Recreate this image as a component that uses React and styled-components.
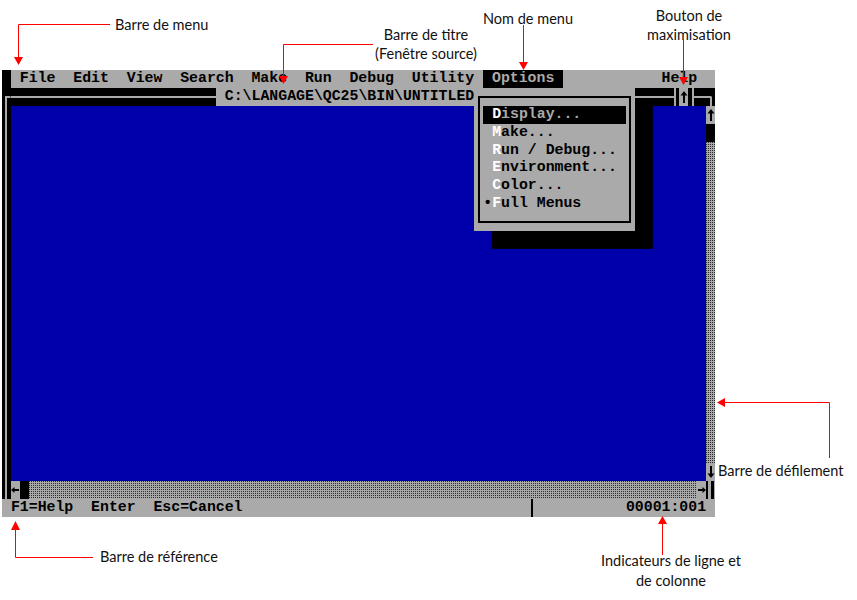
import React from 'react';
import styled, { createGlobalStyle } from 'styled-components';

// text-mode grid: 80 x 25 cells
const CW = 713 / 80;
const RH = 447 / 25;
const cols = (n) => `${n * CW}px`;
const rows = (n) => `${n * RH}px`;

const GRAY = '#aaaaaa';
const BLUE = '#0000aa';
const BLACK = '#000000';
const WHITE = '#ffffff';
const RED = '#ff0000';

const GlobalStyle = createGlobalStyle`
  html, body {
    margin: 0;
    padding: 0;
    background: #ffffff;
  }
`;

const Figure = styled.div`
  position: relative;
  width: 857px;
  height: 600px;
  padding: 70px 0 0 2px;
  box-sizing: border-box;
  overflow: hidden;
`;

const Screen = styled.div`
  position: relative;
  width: 713px;
  height: 447px;
  display: flex;
  flex-direction: column;
  background: ${BLACK};
  font-family: "Liberation Mono", "DejaVu Sans Mono", monospace;
  font-weight: bold;
  font-size: ${CW / 0.6}px;
  line-height: ${RH}px;
  color: ${BLACK};
  white-space: pre;
`;

const Row = styled.div`
  display: flex;
  flex: none;
  height: ${RH}px;
  background: ${(p) => p.$bg || BLACK};
`;

const Body = styled.div`
  display: flex;
  flex: none;
  height: ${rows(21)};
`;

/* ---------- box-drawing frame ---------- */
const seg = (pos, size) => `linear-gradient(${GRAY}, ${GRAY}) ${pos} / ${size} no-repeat`;
const LINES = {
  h: [seg('0 50%', '100% 2px')],
  v: [seg('50% 0', '2px 100%')],
  tl: [seg('100% 50%', 'calc(50% + 1px) 2px'), seg('50% 100%', '2px 50%')],
  tr: [seg('0 50%', 'calc(50% + 1px) 2px'), seg('50% 100%', '2px 50%')],
  lt: [seg('0 50%', '50% 2px'), seg('50% 0', '2px 100%')],
  rt: [seg('100% 50%', '50% 2px'), seg('50% 0', '2px 100%')],
};

const Frame = styled.span`
  flex: ${(p) => (p.$grow ? '1 1 0' : 'none')};
  width: ${(p) => (p.$grow ? 'auto' : cols(p.$w || 1))};
  height: 100%;
  background: ${(p) => LINES[p.$kind].join(', ')}, ${BLACK};
`;

/* ---------- menu bar ---------- */
const MenuBar = styled(Row)`
  background: ${GRAY};
`;

const Blank = styled.span`
  flex: none;
  width: ${(p) => cols(p.$w || 1)};
  background: ${(p) => p.$bg || 'transparent'};
`;

const Spacer = styled.span`
  flex: 1 1 0;
`;

const MenuItem = styled.span`
  flex: none;
  padding: 0 ${CW}px;
  background: ${(p) => (p.$active ? BLACK : 'transparent')};
  color: ${(p) => (p.$active ? GRAY : BLACK)};
`;

/* ---------- title bar ---------- */
const Title = styled.span`
  flex: none;
  width: ${cols(29)};
  background: ${GRAY};
  color: ${BLACK};
`;

const Button = styled.span`
  flex: none;
  width: ${cols(1)};
  height: ${RH}px;
  display: flex;
  align-items: center;
  justify-content: center;
  background: ${GRAY};
`;

/* ---------- editor + scrollbars ---------- */
const Editor = styled.div`
  flex: 1 1 0;
  background: ${BLUE};
`;

const VScroll = styled.div`
  flex: none;
  width: ${cols(1)};
  display: flex;
  flex-direction: column;
`;

const Thumb = styled.span`
  flex: none;
  width: ${cols(1)};
  height: ${RH}px;
  background: ${BLACK};
`;

const Track = styled.span`
  flex: 1 1 0;
  background-color: ${GRAY};
  background-image: conic-gradient(at 1px 1px, transparent 270deg, #2a2a2a 0);
  background-size: 2px 2px;
`;

const Corner = styled.span`
  flex: none;
  width: ${cols(1)};
  background: linear-gradient(
    90deg,
    ${BLACK} 0 2.5px,
    ${GRAY} 2.5px 5px,
    ${BLACK} 5px 8px,
    ${GRAY} 8px
  );
`;

const ArrowSvg = styled.svg`
  display: block;
  transform: ${(p) => (p.$flip ? (p.$h ? 'scaleX(-1)' : 'scaleY(-1)') : 'none')};
`;

function VArrow({ down }) {
  return (
    <ArrowSvg $flip={down} width="8" height="12" viewBox="0 0 8 12">
      <path d="M4 0 L7.5 4.5 L0.5 4.5 Z" fill={BLACK} />
      <rect x="3" y="3" width="2" height="9" fill={BLACK} />
    </ArrowSvg>
  );
}

function HArrow({ left }) {
  return (
    <ArrowSvg $flip={left} $h width="8" height="6" viewBox="0 0 8 6">
      <path d="M8 3 L4.5 0 L4.5 6 Z" fill={BLACK} />
      <rect x="0" y="2" width="5" height="2" fill={BLACK} />
    </ArrowSvg>
  );
}

/* ---------- status bar ---------- */
const StatusText = styled.span`
  flex: none;
  width: ${cols(59)};
`;

const Divider = styled.span`
  flex: none;
  width: ${cols(1)};
  background: linear-gradient(${BLACK}, ${BLACK}) 50% 0 / 2px 100% no-repeat;
`;

const Position = styled.span`
  flex: 1 1 0;
  text-align: right;
  padding-right: ${CW}px;
`;

/* ---------- pull-down menu ---------- */
const Dropdown = styled.div`
  position: absolute;
  left: ${cols(53)};
  top: ${rows(1)};
  width: ${cols(18)};
  height: ${rows(8)};
  box-sizing: border-box;
  padding: ${rows(1)} 0 0 ${cols(1)};
  background: ${GRAY};
  box-shadow: ${cols(2)} ${rows(1)} 0 ${BLACK};

  &::before {
    content: '';
    position: absolute;
    left: ${CW / 2 - 1}px;
    right: ${CW / 2 - 1}px;
    top: ${RH / 2 - 1}px;
    bottom: ${RH / 2 - 1}px;
    border: 2px solid ${BLACK};
  }
`;

const Entry = styled.div`
  position: relative;
  width: ${cols(16)};
  height: ${RH}px;
  background: ${(p) => (p.$active ? BLACK : 'transparent')};
  color: ${(p) => (p.$active ? GRAY : BLACK)};
`;

const Hot = styled.span`
  color: ${WHITE};
`;

/* ---------- annotations ---------- */
const Callout = styled.div`
  position: absolute;
  left: ${(p) => p.$x}px;
  top: ${(p) => p.$y}px;
  transform: ${(p) => (p.$center ? 'translateX(-50%)' : 'none')};
  font-family: Lato, "Open Sans", sans-serif;
  font-size: 14.5px;
  line-height: ${(p) => p.$lh || 18}px;
  color: #111111;
  text-align: center;
  white-space: nowrap;
`;

const Arrows = styled.svg`
  position: absolute;
  left: 0;
  top: 0;
  pointer-events: none;
`;

const menus = ['File', 'Edit', 'View', 'Search', 'Make', 'Run', 'Debug', 'Utility', 'Options'];

const options = [
  { mark: ' ', hot: 'D', rest: 'isplay...', active: true },
  { mark: ' ', hot: 'M', rest: 'ake...' },
  { mark: ' ', hot: 'R', rest: 'un / Debug...' },
  { mark: ' ', hot: 'E', rest: 'nvironment...' },
  { mark: ' ', hot: 'C', rest: 'olor...' },
  { mark: '•', hot: 'F', rest: 'ull Menus' },
];

const callouts = [
  { x: 115, y: 16, lines: ['Barre de menu'] },
  { x: 426, y: 25, center: true, lh: 19, lines: ['Barre de titre', '(Fenêtre source)'] },
  { x: 528, y: 10, center: true, lines: ['Nom de menu'] },
  { x: 689, y: 6, center: true, lh: 19, lines: ['Bouton de', 'maximisation'] },
  { x: 718, y: 462, lines: ['Barre de défilement'] },
  { x: 100, y: 548, lines: ['Barre de référence'] },
  { x: 671, y: 551, center: true, lh: 20, lines: ['Indicateurs de ligne et', 'de colonne'] },
];

const leaders = [
  { d: 'M110 24.5 H18.5 V57', head: '14,57 23,57 18.5,65' },
  { d: 'M373 44.5 H283.5 V76', head: '279,76 288,76 283.5,84' },
  { d: 'M523.5 25 V62', head: '519,62 528,62 523.5,70' },
  { d: 'M683.5 39 V77', head: '679,77 688,77 683.5,85' },
  { d: 'M829.5 458 V402.5 H725', head: '725,398 725,407 717,402.5' },
  { d: 'M93 557.5 H15.5 V530', head: '11,530 20,530 15.5,521' },
  { d: 'M662.5 555 V524', head: '658,524 667,524 662.5,516' },
];

export default function App() {
  return (
    <>
      <GlobalStyle />
      <Figure>
        <Screen>
          <MenuBar>
            <Blank $bg={BLACK} />
            {menus.map((m) => (
              <MenuItem key={m} $active={m === 'Options'}>
                {m}
              </MenuItem>
            ))}
            <Spacer />
            <MenuItem>Help</MenuItem>
            <Blank />
          </MenuBar>

          <Row>
            <Frame $kind="tl" />
            <Frame $kind="h" $w={23} />
            <Title>{' C:\\LANGAGE\\QC25\\BIN\\UNTITLED'}</Title>
            <Frame $kind="h" $grow />
            <Frame $kind="lt" />
            <Button>
              <VArrow />
            </Button>
            <Frame $kind="rt" />
            <Frame $kind="h" />
            <Frame $kind="tr" />
          </Row>

          <Body>
            <Frame $kind="v" />
            <Editor />
            <VScroll>
              <Button>
                <VArrow />
              </Button>
              <Thumb />
              <Track />
              <Button>
                <VArrow down />
              </Button>
            </VScroll>
          </Body>

          <Row>
            <Frame $kind="v" />
            <Button>
              <HArrow left />
            </Button>
            <Thumb />
            <Track />
            <Button>
              <HArrow />
            </Button>
            <Corner />
          </Row>

          <Row $bg={GRAY}>
            <StatusText>{' F1=Help  Enter  Esc=Cancel'}</StatusText>
            <Divider />
            <Position>00001:001</Position>
          </Row>

          <Dropdown>
            {options.map((o) => (
              <Entry key={o.hot} $active={o.active}>
                {o.mark}
                <Hot>{o.hot}</Hot>
                {o.rest}
              </Entry>
            ))}
          </Dropdown>
        </Screen>

        {callouts.map((c) => (
          <Callout key={c.lines[0]} $x={c.x} $y={c.y} $center={c.center} $lh={c.lh}>
            {c.lines.map((l) => (
              <div key={l}>{l}</div>
            ))}
          </Callout>
        ))}

        <Arrows width="857" height="600" viewBox="0 0 857 600">
          {leaders.map((a) => (
            <g key={a.d}>
              <path d={a.d} stroke={RED} strokeWidth="1" fill="none" />
              <polygon points={a.head} fill={RED} />
            </g>
          ))}
        </Arrows>
      </Figure>
    </>
  );
}
